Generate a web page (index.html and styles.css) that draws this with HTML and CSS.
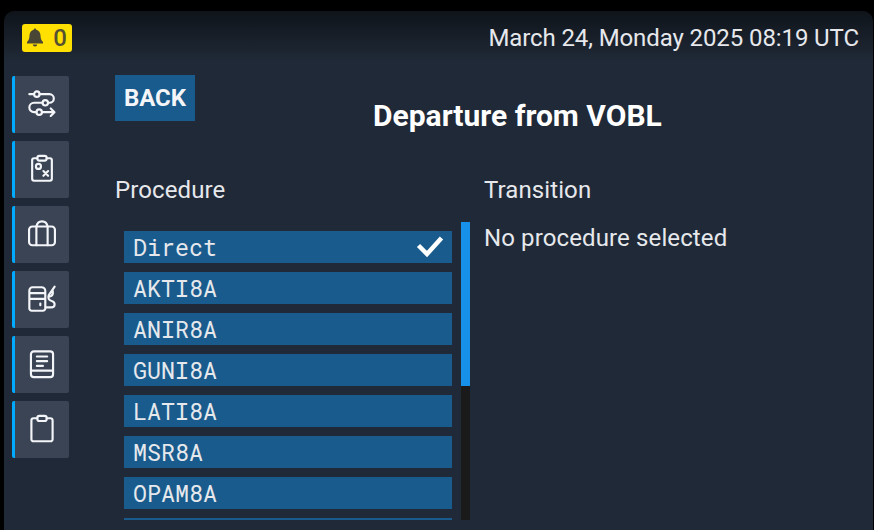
FILE: index.html
```html
<!DOCTYPE html>
<html lang="en">
<head>
  <meta charset="UTF-8" />
  <meta name="viewport" content="width=device-width, initial-scale=1.0" />
  <title>Departure from VOBL</title>
  <link rel="stylesheet" href="styles.css">
</head>
<body>
  <div class="tablet">
    <header class="topbar">
      <button class="alerts">
        <svg width="18" height="19" viewBox="0 0 18 19"><path d="M9 0.5c-.8 0-1.2.6-1.2 1.3C5 2.4 3.6 4.6 3.5 7.5C3.4 11 2.6 12.5 1 14v1.6h16V14c-1.6-1.5-2.4-3-2.5-6.500C14.400 4.600 13 2.400 10.200 1.800C10.200 1.100 9.800.5 9 .5zM6.800 16.600a2.200 1.900 0 0 0 4.400 0z"/></svg>
        <span class="count">0</span>
      </button>
      <span class="clock">March 24, Monday 2025 08:19 UTC</span>
    </header>

    <div class="content">
      <nav class="sidebar">
        <button class="nav-btn">
          <svg class="icon" viewBox="0 0 32 32"><path d="M2.500 5.500h5M13.500 5.500H24a4.600 4.600 0 0 1 0 9.200h-1.500M16.500 14.700H7.500a4.800 4.800 0 0 0 0 10h2.500M16 24.700h12.500M25.300 20.700l4 4-4 4"/><circle cx="10.500" cy="5.500" r="2.900"/><circle cx="19.500" cy="14.700" r="2.900"/><circle cx="13" cy="24.700" r="2.900"/></svg>
        </button>
        <button class="nav-btn">
          <svg class="icon" viewBox="0 0 32 32"><path d="M11 4.500H7.500a2 2 0 0 0-2 2v20a2 2 0 0 0 2 2h17a2 2 0 0 0 2-2v-20a2 2 0 0 0-2-2H21M17.500 18.200l5 5M22.500 18.200l-5 5"/><rect x="11" y="2" width="10" height="5" rx="2.200"/><circle cx="12.200" cy="13.200" r="2.700"/></svg>
        </button>
        <button class="nav-btn">
          <svg class="icon" viewBox="0 0 32 32"><rect x="2.200" y="8" width="27.600" height="20" rx="3.500"/><path d="M10 28V8q1-5.500 6-5.500t6 5.500v20"/></svg>
        </button>
        <button class="nav-btn">
          <svg class="icon" viewBox="0 0 32 32"><path d="M6 3.500h9.500a4 4 0 0 1 4 4V26a2.500 2.500 0 0 1-2.500 2.500H5A2.500 2.500 0 0 1 2.500 26V7A3.500 3.500 0 0 1 6 3.500zM2.500 9.800h17M2.500 15.800h17M14.200 20.800v1.800M19.500 25h6.500c4.500 0 4.300-5.500 1-6.600-4-1-5-3-3.800-6.600l6.300-9M23.500 13.500c3.500-.5 4.500-2.500 4-6"/></svg>
        </button>
        <button class="nav-btn">
          <svg class="icon" viewBox="0 0 32 32"><rect x="4.200" y="2.500" width="23.600" height="27.500" rx="3"/><path d="M4.200 23h23.600M10.500 8h11M10.500 13h11M10.500 18h6.500"/></svg>
        </button>
        <button class="nav-btn">
          <svg class="icon" viewBox="0 0 32 32"><path d="M11 4.500H7a2.300 2.300 0 0 0-2.300 2.300v20a2.300 2.300 0 0 0 2.300 2.300h18a2.300 2.300 0 0 0 2.300-2.300V6.800A2.300 2.300 0 0 0 25 4.500h-4"/><rect x="11" y="2" width="10" height="5.500" rx="2.200"/></svg>
        </button>
      </nav>

      <main class="page">
        <div class="page-head">
          <button class="back">BACK</button>
          <h1>Departure from VOBL</h1>
        </div>

        <div class="columns">
          <section class="procedures">
            <h2>Procedure</h2>
            <div class="scroller">
              <ul class="list">
                <li class="selected">Direct
                  <svg class="check" width="28" height="22" viewBox="0 0 28 22"><path d="M2.500 9.500L11 18L25.500 2"/></svg>
                </li>
                <li>AKTI8A</li>
                <li>ANIR8A</li>
                <li>GUNI8A</li>
                <li>LATI8A</li>
                <li>MSR8A</li>
                <li>OPAM8A</li>
                <li></li>
              </ul>
              <div class="track"><div class="thumb"></div></div>
            </div>
          </section>

          <section class="transitions">
            <h2>Transition</h2>
            <p>No procedure selected</p>
          </section>
        </div>
      </main>
    </div>
  </div>
</body>
</html>
```
FILE: styles.css
```css
* {
  box-sizing: border-box;
}
body {
  margin: 0;
  padding: 11px 1px 0 4px;
  height: 530px;
  overflow: hidden;
  background-color: #000;
  font-family: Roboto, sans-serif;
  font-size: 24px;
  color: #e6e8ec;
}
button {
  border: 0;
  margin: 0;
  padding: 0;
  font-family: inherit;
  color: inherit;
}
h1, h2, p, ul {
  margin: 0;
  padding: 0;
}
.tablet {
  height: 519px;
  border-radius: 10px 10px 0 0;
  background: linear-gradient(#0f141a, #202937 50px);
}
.topbar {
  display: flex;
  justify-content: space-between;
  align-items: center;
  height: 65px;
  padding: 0 14px 12px 18px;
}
.alerts {
  display: flex;
  align-items: center;
  justify-content: space-between;
  width: 50px;
  height: 28px;
  padding: 0 5px 0 4px;
  border-radius: 3px;
  background-color: #ffe000;
  color: #555030;
}
.alerts svg {
  fill: #4a4636;
}
.count {
  font-size: 24px;
  font-weight: 500;
  line-height: 28px;
}
.clock {
  line-height: 28px;
  letter-spacing: -0.1px;
}
.content {
  display: flex;
}
.sidebar {
  display: flex;
  flex-direction: column;
  gap: 8px;
  width: 65px;
  padding-left: 8px;
}
.nav-btn {
  display: flex;
  align-items: center;
  justify-content: center;
  height: 57px;
  padding-bottom: 1px;
  border-left: 3px solid #00aaff;
  border-radius: 2px;
  background-color: #3a4455;
}
.icon {
  width: 30px;
  height: 30px;
  fill: none;
  stroke: #f3f5f8;
  stroke-width: 2.3;
  stroke-linecap: round;
  stroke-linejoin: round;
}
.page {
  flex: 1;
  padding-left: 46px;
}
.page-head {
  display: flex;
  align-items: flex-start;
  height: 98px;
}
.back {
  width: 80px;
  height: 46px;
  margin-top: -1px;
  background-color: #195b8c;
  color: #f3f5f8;
  font-size: 24px;
  font-weight: bold;
}
h1 {
  margin: 22px 0 0 178px;
  font-size: 30px;
  line-height: 36px;
  color: #fff;
}
h2 {
  font-size: 24px;
  font-weight: normal;
  line-height: 32px;
  letter-spacing: 0.1px;
}
.columns {
  display: flex;
  gap: 14px;
}
.procedures {
  width: 355px;
}
.scroller {
  display: flex;
  justify-content: space-between;
  height: 298px;
  margin-top: 16px;
  overflow: hidden;
}
.list {
  width: 337px;
  padding: 9px 0 0 9px;
  list-style: none;
  font-family: "Roboto Mono", "DejaVu Sans Mono", monospace;
  font-size: 23.3px;
}
.list li {
  display: flex;
  align-items: center;
  justify-content: space-between;
  height: 32px;
  margin-bottom: 9px;
  padding: 0 8px 1px 9px;
  background-color: #195b8c;
}
.check {
  fill: none;
  stroke: #fff;
  stroke-width: 4.5;
}
.track {
  width: 9px;
  background-color: #1a1a1a;
}
.thumb {
  height: 164px;
  background-color: #1690e8;
}
.transitions p {
  margin-top: 16px;
  line-height: 32px;
  letter-spacing: 0.12px;
}
```
